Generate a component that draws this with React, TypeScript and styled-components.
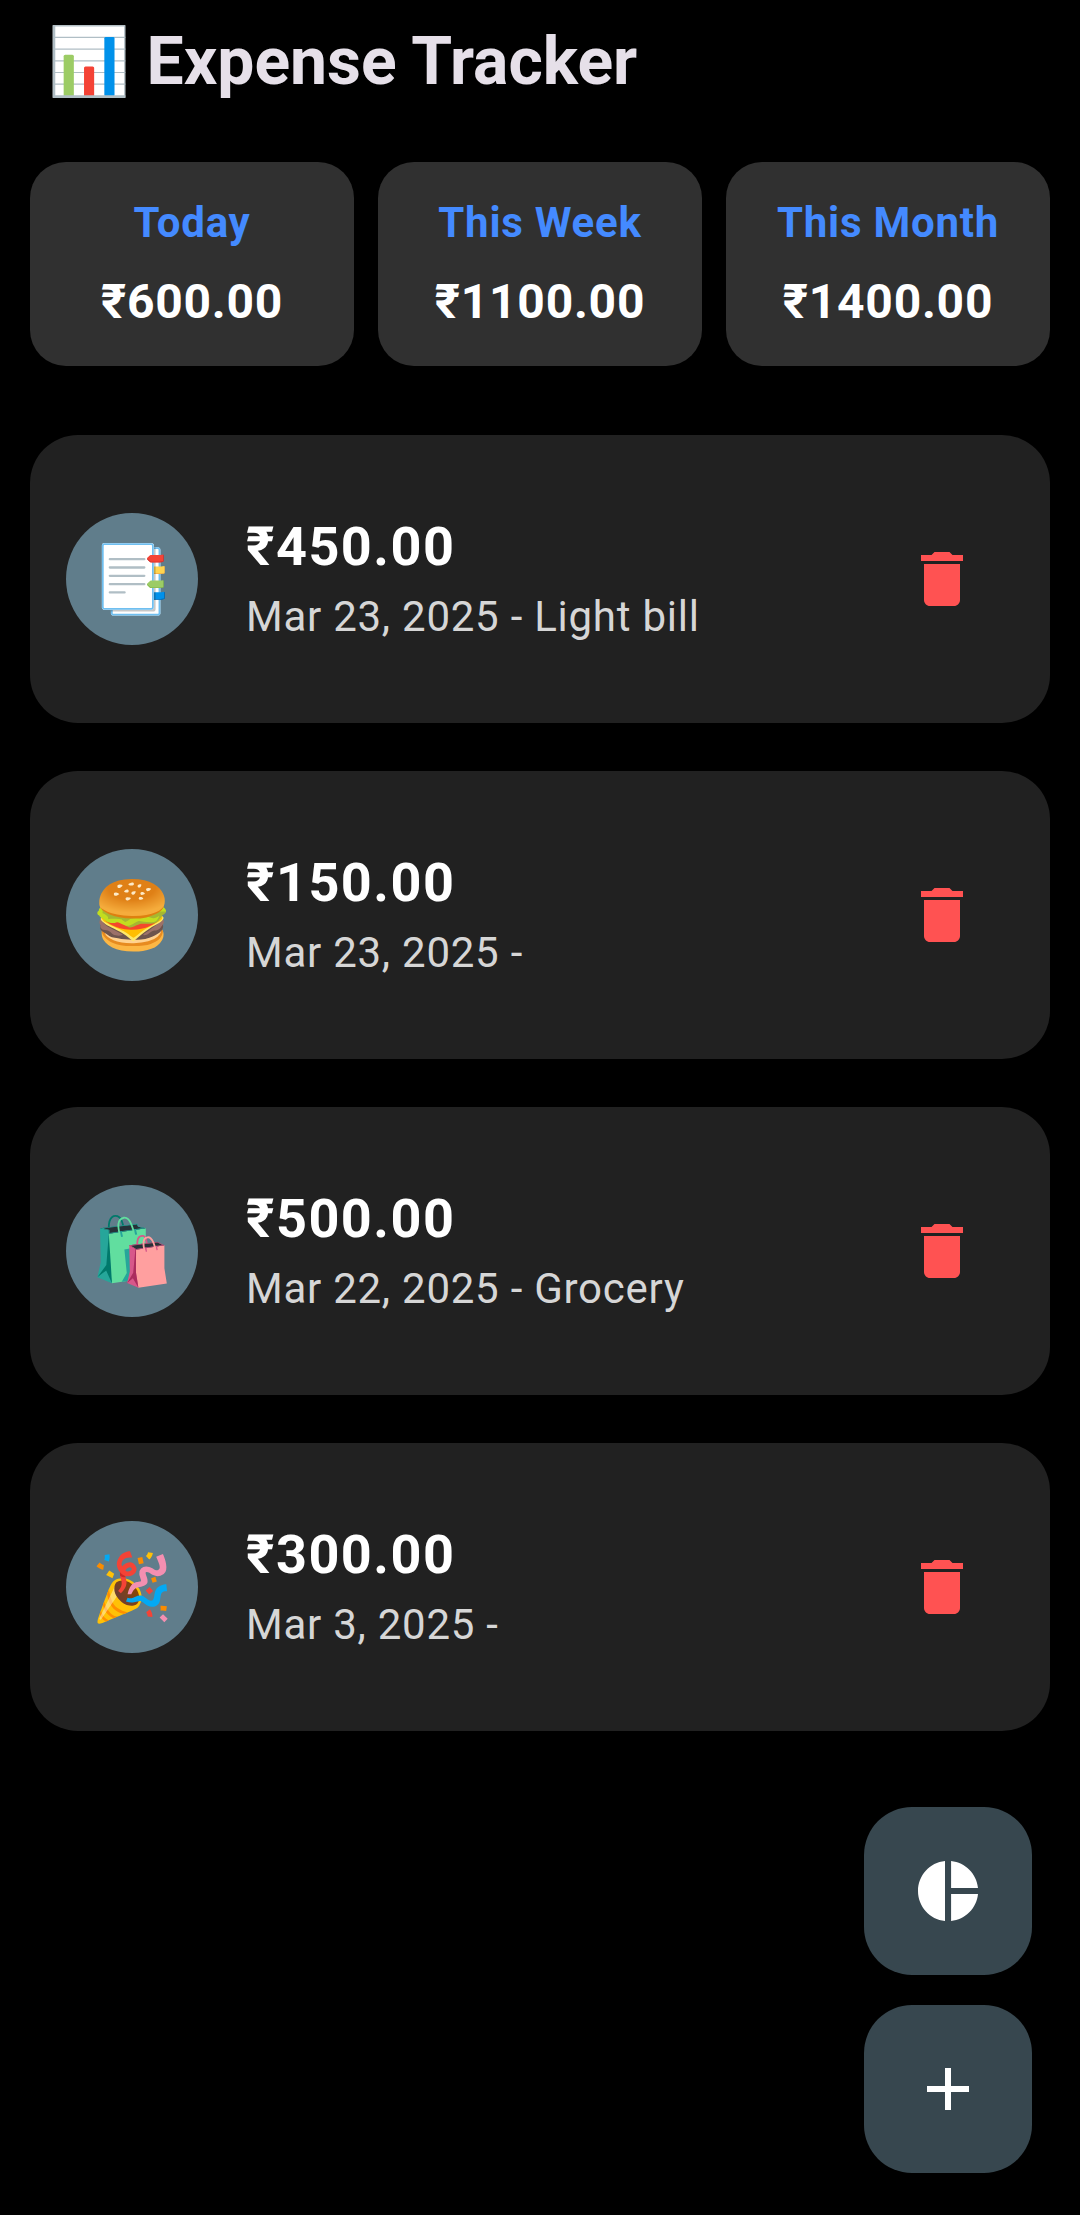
import React from "react";
import styled, { createGlobalStyle } from "styled-components";

const GlobalStyle = createGlobalStyle`
  *, *::before, *::after { box-sizing: border-box; }
  html, body { margin: 0; background: #000; }
  body { font-family: Roboto, "Noto Color Emoji", sans-serif; }
`;

const Screen = styled.div`
  display: flex;
  flex-direction: column;
  min-height: 2215px;
  padding: 22px 30px 42px;
  background: #000;
`;

const Title = styled.h1`
  margin: 0;
  padding-left: 18px;
  color: #e6e0e9;
  font-size: 66px;
  font-weight: 700;
  line-height: 79px;
  white-space: pre;
`;

const SummaryRow = styled.section`
  display: grid;
  grid-template-columns: repeat(3, 1fr);
  gap: 24px;
  margin-top: 61px;
`;

const SummaryCard = styled.div`
  display: flex;
  flex-direction: column;
  align-items: center;
  gap: 25px;
  height: 204px;
  padding: 36px 0;
  border-radius: 36px;
  background: #303030;
  font-weight: 700;
  letter-spacing: 0.75px;
  white-space: nowrap;
`;

const SummaryLabel = styled.span`
  color: #448aff;
  font-size: 42px;
  line-height: 50px;
`;

const SummaryAmount = styled.span`
  color: #fff;
  font-size: 48px;
  line-height: 57px;
`;

const ExpenseList = styled.ul`
  display: flex;
  flex-direction: column;
  gap: 48px;
  margin: 69px 0 0;
  padding: 0;
  list-style: none;
`;

const ExpenseCard = styled.li`
  display: flex;
  align-items: center;
  gap: 48px;
  height: 288px;
  padding: 0 72px 0 36px;
  border-radius: 48px;
  background: #212121;
`;

const Avatar = styled.div`
  display: flex;
  flex: none;
  align-items: center;
  justify-content: center;
  width: 132px;
  height: 132px;
  padding-top: 2px;
  border-radius: 50%;
  background: #607d8b;
  font-size: 66px;
  line-height: 78px;
`;

const Details = styled.div`
  display: flex;
  flex: 1;
  flex-direction: column;
  min-width: 0;
  white-space: nowrap;
`;

const Amount = styled.span`
  color: #fff;
  font-size: 54px;
  font-weight: 700;
  letter-spacing: 1.5px;
  line-height: 76px;
`;

const Note = styled.span`
  color: #d6d6d6;
  font-size: 42px;
  letter-spacing: 0.75px;
  line-height: 64px;
`;

const IconButton = styled.button`
  display: flex;
  align-items: center;
  justify-content: center;
  padding: 0;
  border: 0;
  background: none;
  color: #ff5252;
`;

const Fab = styled(IconButton)`
  width: 168px;
  height: 168px;
  border-radius: 48px;
  background: #37474f;
  color: #fff;
`;

const FabColumn = styled.div`
  display: flex;
  flex-direction: column;
  align-self: flex-end;
  gap: 30px;
  margin: auto 18px 0 0;
`;

const Glyph = styled.svg`
  display: block;
  width: 72px;
  height: 72px;
  fill: currentColor;
`;

const DELETE = "M6 19c0 1.1.9 2 2 2h8c1.1 0 2-.9 2-2V7H6v12zM19 4h-3.5l-1-1h-5l-1 1H5v2h14V4z";
const PIE = "M11 2v20c-5.07-.5-9-4.79-9-10s3.93-9.5 9-10zm2.03 0v8.99H22c-.47-4.74-4.24-8.52-8.97-8.99zm0 11.01V22c4.74-.47 8.5-4.25 8.97-8.99h-8.97z";
const ADD = "M19 13h-6v6h-2v-6H5v-2h6V5h2v6h6v2z";

const Icon = ({ path }: { path: string }) => (
  <Glyph viewBox="0 0 24 24" aria-hidden="true">
    <path d={path} />
  </Glyph>
);

const totals = [
  { label: "Today", amount: "₹600.00" },
  { label: "This Week", amount: "₹1100.00" },
  { label: "This Month", amount: "₹1400.00" },
];

const expenses = [
  { emoji: "📑", amount: "₹450.00", note: "Mar 23, 2025 - Light bill" },
  { emoji: "🍔", amount: "₹150.00", note: "Mar 23, 2025 - " },
  { emoji: "🛍️", amount: "₹500.00", note: "Mar 22, 2025 - Grocery" },
  { emoji: "🎉", amount: "₹300.00", note: "Mar 3, 2025 - " },
];

export default function App() {
  return (
    <Screen>
      <GlobalStyle />
      <Title>📊 Expense Tracker</Title>
      <SummaryRow>
        {totals.map((t) => (
          <SummaryCard key={t.label}>
            <SummaryLabel>{t.label}</SummaryLabel>
            <SummaryAmount>{t.amount}</SummaryAmount>
          </SummaryCard>
        ))}
      </SummaryRow>
      <ExpenseList>
        {expenses.map((e) => (
          <ExpenseCard key={e.emoji}>
            <Avatar>{e.emoji}</Avatar>
            <Details>
              <Amount>{e.amount}</Amount>
              <Note>{e.note}</Note>
            </Details>
            <IconButton aria-label="Delete">
              <Icon path={DELETE} />
            </IconButton>
          </ExpenseCard>
        ))}
      </ExpenseList>
      <FabColumn>
        <Fab aria-label="Charts">
          <Icon path={PIE} />
        </Fab>
        <Fab aria-label="Add expense">
          <Icon path={ADD} />
        </Fab>
      </FabColumn>
    </Screen>
  );
}
